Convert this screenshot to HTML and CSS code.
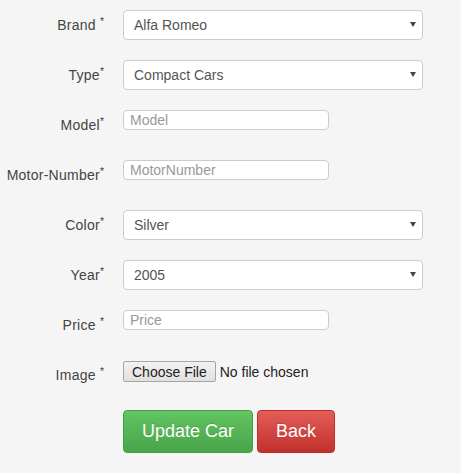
FILE: index.html
```html
<!DOCTYPE html>
<html lang="en">
<head>
<meta charset="utf-8">
<title>Update Car</title>
<link rel="stylesheet" href="styles.css">
</head>
<body>
<form class="car-form">
  <div class="row">
    <label class="lbl" for="brand">Brand <sup>*</sup></label>
    <div class="select-wrap"><select id="brand" class="sel"><option>Alfa Romeo</option></select></div>
  </div>
  <div class="row">
    <label class="lbl" for="type">Type<sup>*</sup></label>
    <div class="select-wrap"><select id="type" class="sel"><option>Compact Cars</option></select></div>
  </div>
  <div class="row">
    <label class="lbl" for="model">Model<sup>*</sup></label>
    <div><input id="model" class="txt" type="text" placeholder="Model"></div>
  </div>
  <div class="row">
    <label class="lbl" for="motor">Motor-Number<sup>*</sup></label>
    <div><input id="motor" class="txt" type="text" placeholder="MotorNumber"></div>
  </div>
  <div class="row">
    <label class="lbl" for="color">Color<sup>*</sup></label>
    <div class="select-wrap"><select id="color" class="sel"><option>Silver</option></select></div>
  </div>
  <div class="row">
    <label class="lbl" for="year">Year<sup>*</sup></label>
    <div class="select-wrap"><select id="year" class="sel"><option>2005</option></select></div>
  </div>
  <div class="row">
    <label class="lbl" for="price">Price <sup>*</sup></label>
    <div><input id="price" class="txt" type="text" placeholder="Price"></div>
  </div>
  <div class="row">
    <label class="lbl" for="image">Image <sup>*</sup></label>
    <div><input id="image" class="file" type="file"></div>
  </div>
  <div class="row">
    <span></span>
    <div class="btns">
      <button type="submit" class="btn btn-success">Update Car</button>
      <button type="button" class="btn btn-danger">Back</button>
    </div>
  </div>
</form>
</body>
</html>
```
FILE: styles.css
```css
html, body {
  margin: 0;
  padding: 0;
  background: #f5f5f5;
  font-family: "Liberation Sans", Arial, sans-serif;
  font-size: 14px;
  color: #444;
}

.car-form {
  padding-top: 10px;
}

.row {
  display: grid;
  grid-template-columns: 104px 300px;
  column-gap: 19px;
  align-items: start;
  min-height: 30px;
  margin-bottom: 20px;
}

.lbl {
  text-align: right;
  padding-top: 5px;
  line-height: 20px;
  white-space: nowrap;
  color: #444;
  letter-spacing: 0.25px;
}

.lbl sup {
  font-size: 75%;
  line-height: 0;
  position: relative;
  vertical-align: baseline;
  top: -0.5em;
  letter-spacing: 0;
}

.select-wrap {
  position: relative;
  width: 300px;
}

.select-wrap::after {
  content: "";
  position: absolute;
  right: 7px;
  top: 12px;
  width: 0;
  height: 0;
  border-left: 3.5px solid transparent;
  border-right: 3.5px solid transparent;
  border-top: 5px solid #444;
  pointer-events: none;
}

.sel {
  -webkit-appearance: none;
  appearance: none;
  display: block;
  box-sizing: border-box;
  width: 300px;
  height: 30px;
  margin: 0;
  padding: 0 24px 0 10px;
  border: 1px solid #ccc;
  border-radius: 4px;
  background: #fff;
  font-family: "Liberation Sans", Arial, sans-serif;
  font-size: 14px;
  color: #555;
}

.txt {
  display: block;
  box-sizing: border-box;
  width: 206px;
  height: 20px;
  margin: 0;
  padding: 0 6px;
  border: 1px solid #ccc;
  border-radius: 4px;
  background: #fff;
  font-family: "Liberation Sans", Arial, sans-serif;
  font-size: 14px;
  color: #555;
}

.txt::placeholder {
  color: #999;
}

.file {
  display: block;
  margin: 1px 0 0;
  padding: 0;
  font-family: "Liberation Sans", Arial, sans-serif;
  font-size: 14px;
  color: #222;
}

.file::file-selector-button {
  box-sizing: border-box;
  height: 21px;
  margin: 0 4px 0 0;
  padding: 0 8px;
  border: 1px solid #a6a6a6;
  border-radius: 2px;
  background: linear-gradient(#f2f2f2, #e0e0e0);
  font-family: "Liberation Sans", Arial, sans-serif;
  font-size: 14px;
  color: #222;
}

.btns {
  display: flex;
  gap: 4px;
}

.btn {
  box-sizing: border-box;
  height: 43px;
  padding: 0 18px;
  border: 1px solid;
  border-radius: 4px;
  font-family: "Liberation Sans", Arial, sans-serif;
  font-size: 18px;
  line-height: 23px;
  color: #fff;
  cursor: pointer;
  text-shadow: 0 -1px 0 rgba(0, 0, 0, 0.15);
}

.btn-success {
  background: linear-gradient(#62c462, #48a548);
  border-color: #45a045;
}

.btn-danger {
  background: linear-gradient(#e35d59, #c2302c);
  border-color: #bd2d29;
}
```
